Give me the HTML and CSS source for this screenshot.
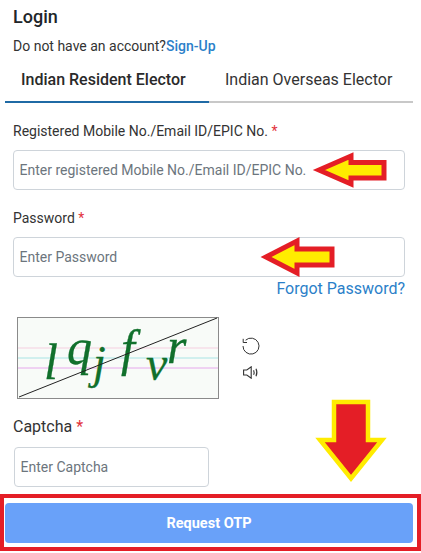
FILE: index.html
```html
<!DOCTYPE html>
<html lang="en">
<head>
<meta charset="utf-8">
<title>Login</title>
<link rel="stylesheet" href="styles.css">
</head>
<body>
<main class="page">
  <h1 class="title">Login</h1>
  <p class="signup">Do not have an account?<a class="signup-link" href="#">Sign-Up</a></p>
  <nav class="tabs">
    <div class="tab tab-active">Indian Resident Elector</div>
    <div class="tab">Indian Overseas Elector</div>
  </nav>
  <form class="form">
    <label class="label label-first">Registered Mobile No./Email ID/EPIC No. <span class="req">*</span></label>
    <input class="field" type="text" placeholder="Enter registered Mobile No./Email ID/EPIC No.">
    <label class="label label-password">Password <span class="req">*</span></label>
    <input class="field field-password" type="text" placeholder="Enter Password">
    <a class="forgot" href="#">Forgot Password?</a>
    <div class="captcha-row">
      <svg class="captcha-img" width="202" height="82" viewBox="0 0 202 82">
        <rect x="0.5" y="0.5" width="201" height="81" fill="#f8fbf8" stroke="#8a8a8a"/>
        <line x1="1" y1="31" x2="201" y2="31" stroke="#f5cfe0"/>
        <line x1="1" y1="41" x2="201" y2="41" stroke="#a8e4e4"/>
        <line x1="1" y1="51" x2="201" y2="51" stroke="#e6a8ec"/>
        <g class="captcha-text">
          <text x="27" y="62" font-size="50">l</text>
          <text x="50" y="47" font-size="50">q</text>
          <text x="76" y="61" font-size="46">j</text>
          <text x="104" y="48" font-size="50">f</text>
          <text x="129" y="63" font-size="48">v</text>
          <text x="150" y="46" font-size="50">r</text>
        </g>
        <line x1="2" y1="80" x2="200" y2="1" stroke="#222"/>
      </svg>
      <div class="captcha-actions">
        <svg class="icon" width="18" height="18" viewBox="0 0 18 18" fill="none" stroke="#333" stroke-width="1">
          <path d="M3.600 3.200A8 8 0 1 1 1 9"/>
          <path d="M1.200 1.800V5.500H5"/>
        </svg>
        <svg class="icon" width="16" height="13" viewBox="0 0 16 13" fill="none" stroke="#333" stroke-width="1.100">
          <path d="M0.600 4H3.800L8.200 0.800V12.200L3.800 9H0.600Z"/>
          <path d="M10.600 4.200Q11.600 6.500 10.600 8.800"/>
          <path d="M13 2.800Q14.800 6.500 13 10.200"/>
        </svg>
      </div>
    </div>
    <label class="label label-captcha">Captcha <span class="req">*</span></label>
    <input class="field field-captcha" type="text" placeholder="Enter Captcha">
    <div class="submit-frame">
      <button class="submit" type="button">Request OTP</button>
    </div>
  </form>
</main>
<svg class="marks" width="421" height="553" viewBox="0 0 421 553">
  <path class="mark-red" d="M319 170L351 156V162.500H384V178H351V184Z"/>
  <path class="mark-red" d="M266 257L297 241V249H332V265H297V273Z"/>
  <path class="mark-yellow" d="M334 402H368V440H382L351 478.500L320 440H334Z"/>
</svg>
</body>
</html>
```
FILE: styles.css
```css
* {
  box-sizing: border-box;
}

html,
body {
  margin: 0;
  background: #fff;
}

body {
  position: relative;
  width: 421px;
  height: 553px;
  overflow: hidden;
  font-family: Roboto, "Liberation Sans", sans-serif;
  color: #212529;
}

.page {
  display: flex;
  flex-direction: column;
  padding-top: 7px;
}

.title {
  margin: 0 0 0 13px;
  font-size: 18px;
  line-height: 20px;
  font-weight: 500;
}

.signup {
  margin: 10px 0 0 13px;
  font-size: 14px;
  line-height: 18px;
  color: #333;
}

.signup-link {
  color: #2b7fc9;
  font-weight: 500;
  text-decoration: none;
}

.tabs {
  display: flex;
  margin: 8px 8px 0 5px;
  border-bottom: 2px solid #c8c8c8;
}

.tab {
  flex: 1;
  height: 40px;
  margin-bottom: -2px;
  padding: 7px 0 0 16px;
  font-size: 16px;
  line-height: 20px;
  color: #333;
}

.tab-active {
  font-weight: 500;
  color: #2a2a2a;
  border-bottom: 2px solid #1f6aa5;
}

.form {
  display: flex;
  flex-direction: column;
}

.label {
  margin-left: 13px;
  font-size: 14px;
  line-height: 18px;
  color: #333;
}

.label-first {
  margin-top: 19px;
}

.label-password {
  margin-top: 19px;
}

.label-captcha {
  margin-top: 18px;
  font-size: 16px;
  line-height: 20px;
}

.req {
  color: #e2323c;
}

.field {
  width: 392px;
  height: 40px;
  margin: 10px 0 0 13px;
  padding: 0 5.500px;
  font-family: inherit;
  font-size: 14px;
  border: 1px solid #ced4da;
  border-radius: 4px;
  background: #fff;
}

.field::placeholder {
  color: #6c757d;
  opacity: 1;
}

.field-captcha {
  width: 195px;
  margin: 10px 0 0 14px;
}

.forgot {
  align-self: flex-end;
  margin: 2px 16px 0 0;
  font-size: 16px;
  line-height: 20px;
  color: #2b7fc9;
  text-decoration: none;
}

.captcha-row {
  display: flex;
  align-items: center;
  margin: 18px 0 0 17px;
}

.captcha-img {
  display: block;
}

.captcha-text {
  font-family: "Liberation Serif", serif;
  font-style: italic;
  fill: #11702c;
  stroke: #11702c;
  stroke-width: 0.300;
}

.captcha-actions {
  display: flex;
  flex-direction: column;
  align-items: center;
  gap: 11px;
  margin: 0 0 0 23px;
}

.icon {
  display: block;
}

.submit-frame {
  margin-top: 7px;
  height: 57px;
  padding: 5px 4px 4px 1px;
  border: 4px solid #e41e26;
}

.submit {
  display: block;
  width: 100%;
  height: 40px;
  border: 0;
  border-radius: 4px;
  background: #69a1f9;
  color: #fff;
  font-family: inherit;
  font-size: 14.500px;
  font-weight: 700;
}

.marks {
  position: absolute;
  top: 0;
  left: 0;
  pointer-events: none;
}

.mark-red {
  fill: #ffec00;
  stroke: #e41e26;
  stroke-width: 5;
}

.mark-yellow {
  fill: #e41e26;
  stroke: #ffec00;
  stroke-width: 4.500;
}
```
